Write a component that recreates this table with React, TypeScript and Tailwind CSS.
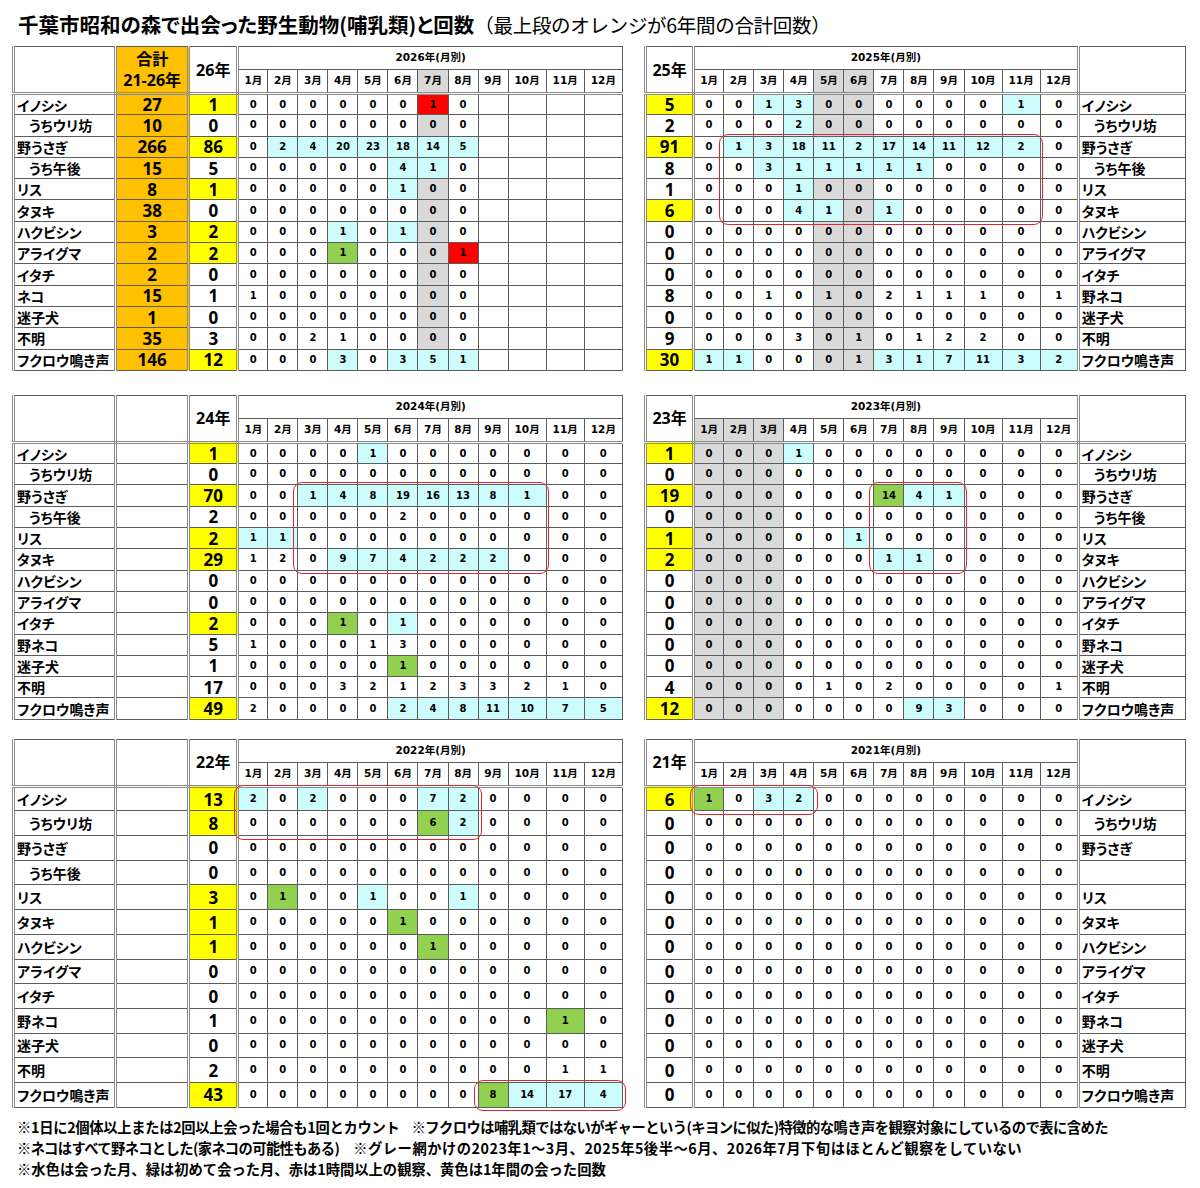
import type { ReactNode } from "react";

type Tone = "" | "c" | "g" | "r" | "y";
type Cell = { v: string; t: Tone };
type Box = { row: number; col: number; rows: number; cols: number };

type TableProps = {
  side: "left" | "right";
  year: string;
  short: string;
  names: string[];
  totals?: string[];
  yearVals: string;
  months: string[];
  gray?: number[];
  boxes?: Box[];
  tall?: boolean;
};

const jp = "font-['Noto_Sans_CJK_JP',sans-serif] [font-feature-settings:'palt']";
const num = "font-['DejaVu_Sans','Noto_Sans_CJK_JP',sans-serif]";
const big = "font-['Open_Sans','Noto_Sans_CJK_JP',sans-serif]";

const thin = "border border-[#5c5c5c]";
const dblR = "border-double border-r-[3px] border-r-[#8c8c8c]";
const dblL = "border-double border-l-[3px] border-l-[#8c8c8c]";
const dblB = "border-double border-b-[3px] border-b-[#8c8c8c]";

const MONTH_W = [30, 30, 30, 30, 30, 30, 30, 30, 30, 38, 38, 38];

const Z = "0 0 0 0 0 0 0 0 0 0 0 0";

function parse(s: string): Cell[] {
  return s
    .trim()
    .split(/\s+/)
    .map((tok) => {
      if (tok === "-") return { v: "", t: "" as Tone };
      const m = tok.match(/^(\d+)([cgry]?)$/);
      return { v: m ? m[1] : tok, t: ((m && m[2]) || "") as Tone };
    });
}

function toneBg(t: Tone, gray: boolean) {
  if (t === "c") return "bg-[#cdfcfd]";
  if (t === "g") return "bg-[#92d050]";
  if (t === "r") return "bg-[#ff0000]";
  if (t === "y") return "bg-[#ffff00]";
  return gray ? "bg-[#d9d9d9]" : "";
}

// 赤い角丸の枠: 左上セルの中に置き、幅は月の列幅から計算
function RedBox({ box, rowH }: { box: Box; rowH: number }) {
  let w = 0;
  for (let i = box.col; i < box.col + box.cols; i++) w += MONTH_W[i];
  return (
    <div
      className="pointer-events-none absolute z-10 rounded-[9px] border-[1.5px] border-[#e3262d]"
      style={{ left: -5, top: -3, width: w + 8, height: box.rows * rowH + 6 }}
    />
  );
}

function NameCell({ name, side, rowH }: { name: string; side: "left" | "right"; rowH: string }) {
  const indent = name.startsWith("_");
  const label = indent ? name.slice(1) : name;
  return (
    <td
      className={`${thin} ${side === "left" ? dblR : dblL} ${rowH} ${jp} text-[14px] font-bold leading-none whitespace-nowrap ${
        indent ? "pl-[14px]" : "pl-[2px]"
      }`}
    >
      {label}
    </td>
  );
}

function YearTable({ side, year, short, names, totals, yearVals, months, gray = [], boxes = [], tall }: TableProps) {
  const rowH = tall ? "h-[24.7px]" : "h-[21.3px]";
  const rowPx = tall ? 24.7 : 21.3;
  const yv = parse(yearVals);
  const rows = months.map(parse);

  const yearHead = (
    <th rowSpan={2} className={`${thin} ${dblR} ${dblB} ${big} text-[16px] font-bold`}>
      {short}
    </th>
  );
  const title = (
    <th colSpan={12} className={`${thin} h-[23px] ${num} text-[10.5px] font-bold`}>
      {year}年(月別)
    </th>
  );

  const monthHead = MONTH_W.map((_, i) => (
    <th
      key={i}
      className={`${thin} ${dblB} h-[24px] ${num} text-[10.5px] font-bold ${gray.includes(i) ? "bg-[#d9d9d9]" : ""}`}
    >
      {i + 1}月
    </th>
  ));

  return (
    <table
      className={`table-fixed border-collapse border-double border-l-[3px] border-l-[#8c8c8c] ${
        side === "left" ? "w-[611px]" : "w-[542px]"
      }`}
    >
      <colgroup>
        {side === "left" ? (
          <>
            <col className="w-[102px]" />
            <col className="w-[73px]" />
            <col className="w-[49px]" />
          </>
        ) : (
          <col className="w-[48px]" />
        )}
        <col className="w-[30px]" />
        <col className="w-[30px]" />
        <col className="w-[30px]" />
        <col className="w-[30px]" />
        <col className="w-[30px]" />
        <col className="w-[30px]" />
        <col className="w-[30px]" />
        <col className="w-[30px]" />
        <col className="w-[30px]" />
        <col className="w-[38px]" />
        <col className="w-[38px]" />
        <col className="w-[38px]" />
        {side === "right" ? <col className="w-[107px]" /> : null}
      </colgroup>
      <thead>
        {side === "left" ? (
          <>
            <tr>
              <th rowSpan={2} className={`${thin} ${dblR} ${dblB}`} />
              {totals ? (
                <th
                  rowSpan={2}
                  className={`${thin} ${dblR} ${dblB} bg-[#ffc000] ${big} text-[16px] font-bold leading-[21px]`}
                >
                  合計
                  <br />
                  21-26年
                </th>
              ) : (
                <th rowSpan={2} className={`${thin} ${dblR} ${dblB}`} />
              )}
              {yearHead}
              {title}
            </tr>
            <tr>{monthHead}</tr>
          </>
        ) : (
          <>
            <tr>
              {yearHead}
              {title}
              <th rowSpan={2} className={`${thin} ${dblL} ${dblB}`} />
            </tr>
            <tr>{monthHead}</tr>
          </>
        )}
      </thead>
      <tbody>
        {rows.map((cells, r) => {
          const yearCell = (
            <td
              className={`${thin} ${dblR} ${rowH} ${big} text-[17px] font-bold leading-none text-center ${toneBg(yv[r].t, false)}`}
            >
              {yv[r].v}
            </td>
          );
          const monthCells: ReactNode[] = cells.map((c, i) => {
            const box = boxes.find((b) => b.row === r && b.col === i);
            return (
              <td
                key={i}
                className={`${thin} ${rowH} ${num} text-[10px] font-bold leading-none text-center ${toneBg(
                  c.t,
                  gray.includes(i) && c.v !== ""
                )} ${box ? "relative" : ""}`}
              >
                {c.v}
                {box ? <RedBox box={box} rowH={rowPx} /> : null}
              </td>
            );
          });
          return (
            <tr key={r}>
              {side === "left" ? (
                <>
                  <NameCell name={names[r]} side="left" rowH={rowH} />
                  <td
                    className={`${thin} ${dblR} ${rowH} ${big} text-[17px] font-bold leading-none text-center ${
                      totals ? "bg-[#ffc000]" : ""
                    }`}
                  >
                    {totals ? totals[r] : ""}
                  </td>
                  {yearCell}
                  {monthCells}
                </>
              ) : (
                <>
                  {yearCell}
                  {monthCells}
                  <NameCell name={names[r]} side="right" rowH={rowH} />
                </>
              )}
            </tr>
          );
        })}
      </tbody>
    </table>
  );
}

const NAMES = [
  "イノシシ",
  "_うちウリ坊",
  "野うさぎ",
  "_うち午後",
  "リス",
  "タヌキ",
  "ハクビシン",
  "アライグマ",
  "イタチ",
  "野ネコ",
  "迷子犬",
  "不明",
  "フクロウ鳴き声",
];
const NAMES_26 = NAMES.map((n) => (n === "野ネコ" ? "ネコ" : n));
const NAMES_21 = NAMES.map((n) => (n === "_うち午後" ? "" : n));

const TOTALS = ["27", "10", "266", "15", "8", "38", "3", "2", "2", "15", "1", "35", "146"];

const M26 = [
  "0 0 0 0 0 0 1r 0 - - - -",
  "0 0 0 0 0 0 0 0 - - - -",
  "0 2c 4c 20c 23c 18c 14c 5c - - - -",
  "0 0 0 0 0 4c 1c 0 - - - -",
  "0 0 0 0 0 1c 0 0 - - - -",
  "0 0 0 0 0 0 0 0 - - - -",
  "0 0 0 1c 0 1c 0 0 - - - -",
  "0 0 0 1g 0 0 0 1r - - - -",
  "0 0 0 0 0 0 0 0 - - - -",
  "1 0 0 0 0 0 0 0 - - - -",
  "0 0 0 0 0 0 0 0 - - - -",
  "0 0 2 1 0 0 0 0 - - - -",
  "0 0 0 3c 0 3c 5c 1c - - - -",
];

const M25 = [
  "0 0 1c 3c 0 0 0 0 0 0 1c 0",
  "0 0 0 2c 0 0 0 0 0 0 0 0",
  "0 1c 3c 18c 11c 2c 17c 14c 11c 12c 2c 0",
  "0 0 3c 1c 1c 1c 1c 1c 0 0 0 0",
  "0 0 0 1c 0 0 0 0 0 0 0 0",
  "0 0 0 4c 1c 0 1c 0 0 0 0 0",
  Z,
  Z,
  Z,
  "0 0 1 0 1 0 2 1 1 1 0 1",
  Z,
  "0 0 0 3 0 1 0 1 2 2 0 0",
  "1c 1c 0 0 0 1 3c 1c 7c 11c 3c 2c",
];

const M24 = [
  "0 0 0 0 1c 0 0 0 0 0 0 0",
  Z,
  "0 0 1c 4c 8c 19c 16c 13c 8c 1c 0 0",
  "0 0 0 0 0 2 0 0 0 0 0 0",
  "1c 1c 0 0 0 0 0 0 0 0 0 0",
  "1 2 0 9c 7c 4c 2c 2c 2c 0 0 0",
  Z,
  Z,
  "0 0 0 1g 0 1c 0 0 0 0 0 0",
  "1 0 0 0 1 3 0 0 0 0 0 0",
  "0 0 0 0 0 1g 0 0 0 0 0 0",
  "0 0 0 3 2 1 2 3 3 2 1 0",
  "2 0 0 0 0 2c 4c 8c 11c 10c 7c 5c",
];

const M23 = [
  "0 0 0 1c 0 0 0 0 0 0 0 0",
  Z,
  "0 0 0 0 0 0 14g 4c 1c 0 0 0",
  Z,
  "0 0 0 0 0 1c 0 0 0 0 0 0",
  "0 0 0 0 0 0 1c 1c 0 0 0 0",
  Z,
  Z,
  Z,
  Z,
  Z,
  "0 0 0 0 1 0 2 0 0 0 0 1",
  "0 0 0 0 0 0 0 9c 3c 0 0 0",
];

const M22 = [
  "2c 0 2c 0 0 0 7c 2c 0 0 0 0",
  "0 0 0 0 0 0 6g 2c 0 0 0 0",
  Z,
  Z,
  "0 1g 0 0 1c 0 0 1c 0 0 0 0",
  "0 0 0 0 0 1g 0 0 0 0 0 0",
  "0 0 0 0 0 0 1g 0 0 0 0 0",
  Z,
  Z,
  "0 0 0 0 0 0 0 0 0 0 1g 0",
  Z,
  "0 0 0 0 0 0 0 0 0 0 1 1",
  "0 0 0 0 0 0 0 0 8g 14c 17c 4c",
];

const M21 = ["1g 0 3c 2c 0 0 0 0 0 0 0 0", Z, Z, Z, Z, Z, Z, Z, Z, Z, Z, Z, Z];

export default function App() {
  return (
    <div className={`h-[1188px] w-[1200px] bg-white text-black ${jp}`}>
      <div className="h-[46px] pl-[18px] pt-[10px] leading-[28px] whitespace-nowrap">
        <span className="text-[20.5px] font-bold">千葉市昭和の森で出会った野生動物(哺乳類)と回数</span>
        <span className="text-[19.5px] font-normal tracking-[-0.3px] [font-feature-settings:normal]">
          （最上段のオレンジが6年間の合計回数）
        </span>
      </div>

      <div className="flex items-start gap-[21px] pl-[12px]">
        <YearTable
          side="left"
          year="2026"
          short="26年"
          names={NAMES_26}
          totals={TOTALS}
          yearVals="1y 0 86y 5 1y 0 2y 2y 0 1 0 3 12y"
          months={M26}
          gray={[6]}
        />
        <YearTable
          side="right"
          year="2025"
          short="25年"
          names={NAMES}
          yearVals="5y 2 91y 8 1 6y 0 0 0 8 0 9 30y"
          months={M25}
          gray={[4, 5]}
          boxes={[{ row: 2, col: 1, rows: 4, cols: 10 }]}
        />
      </div>

      <div className="mt-[24px] flex items-start gap-[21px] pl-[12px]">
        <YearTable
          side="left"
          year="2024"
          short="24年"
          names={NAMES}
          yearVals="1y 0 70y 2 2y 29y 0 0 2y 5 1 17 49y"
          months={M24}
          boxes={[{ row: 2, col: 2, rows: 4, cols: 8 }]}
        />
        <YearTable
          side="right"
          year="2023"
          short="23年"
          names={NAMES}
          yearVals="1y 0 19y 0 1y 2y 0 0 0 0 0 4 12y"
          months={M23}
          gray={[0, 1, 2]}
          boxes={[{ row: 2, col: 6, rows: 4, cols: 3 }]}
        />
      </div>

      <div className="mt-[19px] flex items-start gap-[21px] pl-[12px]">
        <YearTable
          side="left"
          year="2022"
          short="22年"
          names={NAMES}
          yearVals="13y 8y 0 0 3y 1y 1y 0 0 1 0 2 43y"
          months={M22}
          tall
          boxes={[
            { row: 0, col: 0, rows: 2, cols: 8 },
            { row: 12, col: 8, rows: 1, cols: 4 },
          ]}
        />
        <YearTable
          side="right"
          year="2021"
          short="21年"
          names={NAMES_21}
          yearVals="6y 0 0 0 0 0 0 0 0 0 0 0 0"
          months={M21}
          tall
          boxes={[{ row: 0, col: 0, rows: 1, cols: 4 }]}
        />
      </div>

      <div className="mt-[8px] pl-[17px] text-[14.3px] font-bold leading-[21px] whitespace-nowrap [font-feature-settings:normal]">
        <div>
          <span className="tracking-[-0.3px]">※1日に2個体以上または2回以上会った場合も1回とカウント</span>
          <span className="ml-[12px] tracking-[-0.55px]">
            ※フクロウは哺乳類ではないがギャーという(キヨンに似た)特徴的な鳴き声を観察対象にしているので表に含めた
          </span>
        </div>
        <div>
          <span className="tracking-[-0.6px]">※ネコはすべて野ネコとした(家ネコの可能性もある)</span>
          <span className="ml-[14px] tracking-[0.5px]">
            ※グレー網かけの2023年1～3月、2025年5後半～6月、2026年7月下旬はほとんど観察をしていない
          </span>
        </div>
        <div>※水色は会った月、緑は初めて会った月、赤は1時間以上の観察、黄色は1年間の会った回数</div>
      </div>
    </div>
  );
}
